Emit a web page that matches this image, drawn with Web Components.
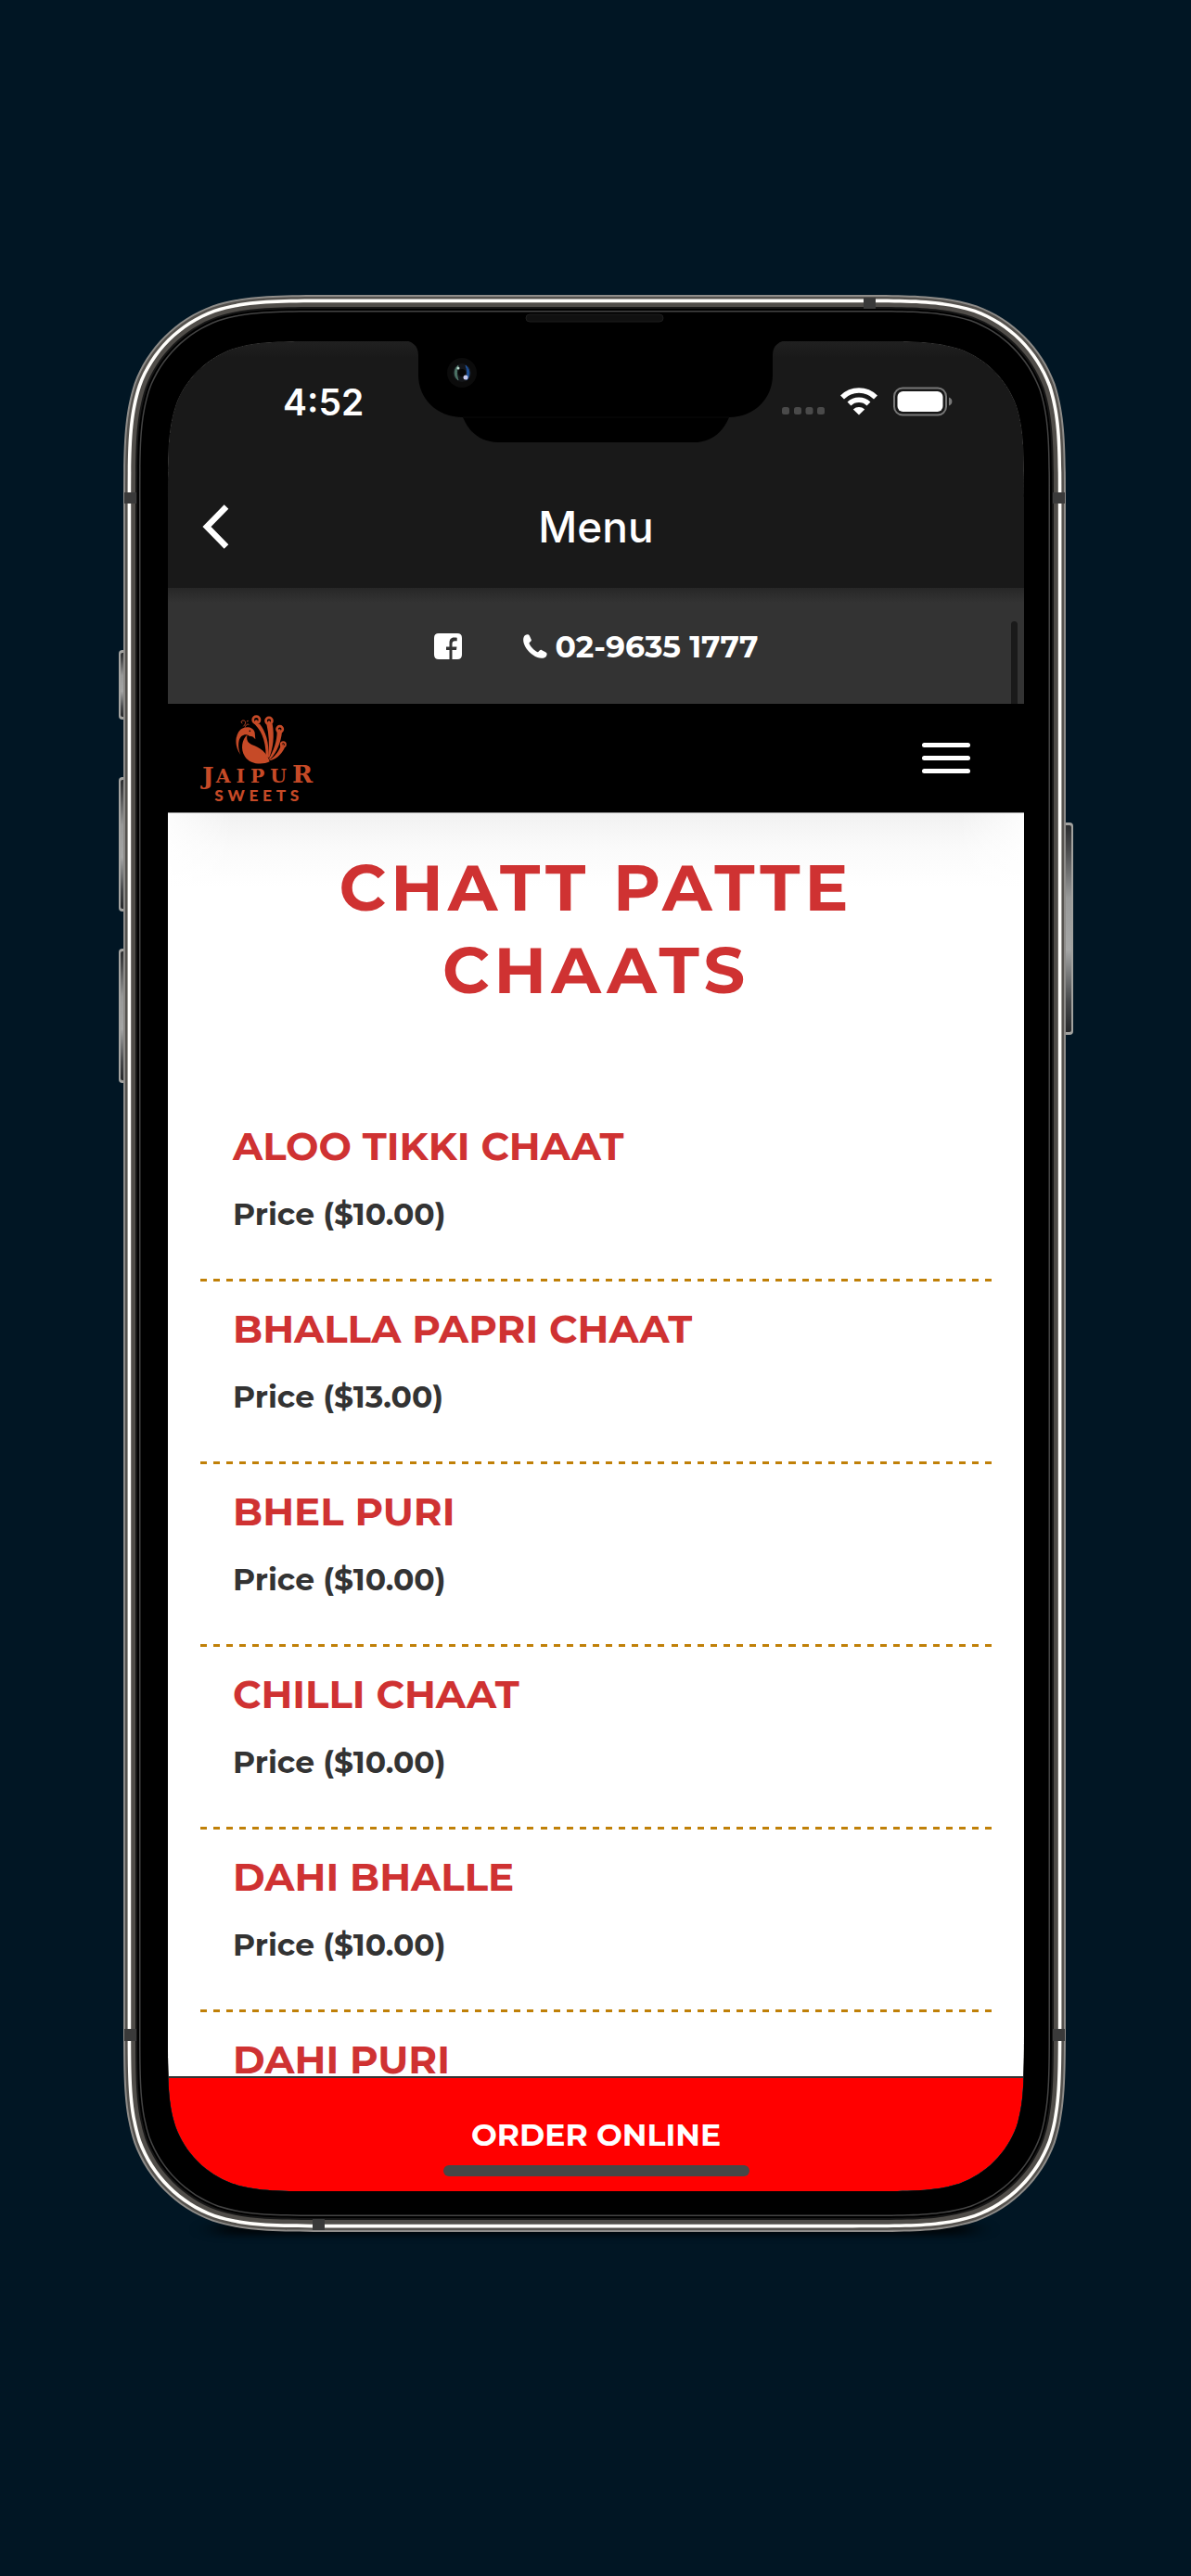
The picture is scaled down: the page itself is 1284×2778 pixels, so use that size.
<!DOCTYPE html>
<html lang="en">
<head>
<meta charset="utf-8">
<meta name="viewport" content="width=device-width, initial-scale=1">
<title>Jaipur Sweets – Menu</title>
<style>
  body { margin: 0; min-height: 100vh; background: #011624; font-family: Montserrat, Inter, sans-serif; }
</style>
</head>
<body>
<phone-frame>
  <app-header heading="Menu" time="4:52"></app-header>
  <contact-bar phone="02-9635 1777"></contact-bar>
  <site-nav></site-nav>
  <menu-section heading="Chatt Patte Chaats">
    <menu-item price="$10.00">Aloo Tikki Chaat</menu-item>
    <menu-item price="$13.00">Bhalla Papri Chaat</menu-item>
    <menu-item price="$10.00">Bhel Puri</menu-item>
    <menu-item price="$10.00">Chilli Chaat</menu-item>
    <menu-item price="$10.00">Dahi Bhalle</menu-item>
    <menu-item>Dahi Puri</menu-item>
  </menu-section>
  <order-bar>Order Online</order-bar>
</phone-frame>

<script>
const define = (name, render) => customElements.define(name, class extends HTMLElement {
  constructor() {
    super();
    this.attachShadow({ mode: "open" });
  }
  connectedCallback() {
    this.shadowRoot.innerHTML = "<style>:host,*{box-sizing:border-box}</style>" + render(this);
  }
});

/* Rounded rectangle with continuous-curvature corners. */
function squircle(x0, y0, x1, y1, r) {
  const a = 1.528 * r, b = 1.088 * r, c = 0.868 * r, d = 0.631 * r, e = 0.075 * r, f = 0.373 * r, g = 0.169 * r;
  const corner = (cx, cy, sx, sy, flip) => {
    const p = (u, v) => `${(cx + sx * u).toFixed(1)} ${(cy + sy * v).toFixed(1)}`;
    const pts = [[a, 0], [b, 0], [c, 0], [d, e], [f, g], [g, f], [e, d], [0, c], [0, b], [0, a]];
    if (flip) pts.reverse();
    const q = pts.map(([u, v]) => p(u, v));
    return `L${q[0]}C${q[1]} ${q[2]} ${q[3]}C${q[4]} ${q[5]} ${q[6]}C${q[7]} ${q[8]} ${q[9]}`;
  };
  return (corner(x1, y0, -1, 1, false) + corner(x1, y1, -1, -1, true) +
          corner(x0, y1, 1, -1, false) + corner(x0, y0, 1, 1, true)).replace("L", "M") + "Z";
}

define("phone-frame", () => {
  const W = 1016, H = 2089, R = 152;
  const hole = squircle(48, 50, 971, 2045, 110);
  const ring = (inset, color) =>
    `<path fill="${color}" fill-rule="evenodd" d="${squircle(inset, inset, W - inset, H - inset, R - inset)}${hole}"/>`;
  const key = (x, y, w, h) =>
    `<rect x="${x}" y="${y}" width="${w}" height="${h}" rx="4" fill="#a2a29f"/>
     <rect x="${x + 2}" y="${y + 3}" width="${w - 4}" height="${h - 6}" rx="2" fill="url(#key)"/>`;
  return `
  <style>
    :host { display: block; position: relative; margin: 318px 135px 0 133px; aspect-ratio: ${W} / ${H}; }
    .screen { height: 100%; padding: 50px 45px 44px 48px; display: flex; flex-direction: column; }
    .glass { flex: 1; min-height: 0; display: flex; flex-direction: column; background: #fff; }
    svg { position: absolute; inset: 0; width: 100%; height: 100%; overflow: visible; pointer-events: none; }
    .shade { z-index: -1; }
  </style>
  <svg class="shade" viewBox="0 0 ${W} ${H}" preserveAspectRatio="none" aria-hidden="true">
    <defs>
      <linearGradient id="key" x1="0" y1="0" x2="0" y2="1">
        <stop offset="0" stop-color="#2b2d2f"/><stop offset=".12" stop-color="#4b4c4d"/>
        <stop offset=".35" stop-color="#989998"/><stop offset=".6" stop-color="#a5a6a5"/>
        <stop offset=".85" stop-color="#47494b"/><stop offset="1" stop-color="#26282a"/>
      </linearGradient>
      <filter id="soft" x="-10%" y="-200%" width="120%" height="500%"><feGaussianBlur stdDeviation="14 4"/></filter>
    </defs>
    <rect x="100" y="2080" width="816" height="12" rx="6" fill="#000" opacity=".8" filter="url(#soft)"/>
    ${key(-5, 383, 12, 75)}${key(-5, 520, 12, 145)}${key(-5, 705, 12, 145)}${key(1009, 569, 15, 229)}
  </svg>
  <div class="screen"><div class="glass"><slot></slot></div></div>
  <svg viewBox="0 0 ${W} ${H}" preserveAspectRatio="none" aria-hidden="true">
    ${ring(0, "#8e8c89")}${ring(2, "#55524e")}${ring(4.6, "#fffefb")}${ring(8.2, "#504d49")}
    ${ring(13, "#161616")}${ring(15, "#000")}${ring(17, "#444")}${ring(18.5, "#000")}
    <g fill="#3a3a3a">
      <path d="M1 213h13v12H1zM1002 213h13v12h-13zM1 1870h13v13H1zM1002 1870h13v13h-13zM798 3h13v12h-13zM204 2075h13v12h-13z"/>
    </g>
    <path d="M300 48C311 50 318 54 318 65V86C318 112 338 132 366 132C373 149 386 159 404 159H615C633 159 646 149 653 132C680 132 700 112 700 86V65C700 54 707 50 718 48Z"/>
    <path d="M366 132H653" stroke="#0b0b0b" fill="none"/>
    <rect x="434" y="21" width="148" height="8" rx="4" fill="#101010" stroke="#1d1d1d"/>
    <circle cx="365" cy="84" r="16" fill="#0b0b0b"/>
    <circle cx="365" cy="84" r="10" fill="#14161a"/>
    <path d="M361 76C356 80 356 88 361 92C359 86 359 81 361 76Z" fill="#4c7365" stroke="#4c7365"/>
    <path d="M369 76C374 80 374 88 370 92C371 86 371 81 369 76Z" fill="#1d4f96" stroke="#1d4f96"/>
    <circle cx="365" cy="84" r="4" fill="#050505"/>
    <circle cx="369" cy="89" r="2.500" fill="#c9cbee"/>
    <circle cx="361" cy="79" r="1.500" fill="#b9d8cc"/>
  </svg>`;
});

define("app-header", el => `
  <style>
    :host { display: block; flex: none; background: linear-gradient(#202020, #191919 18px); color: #fff;
            font-family: Inter, sans-serif; }
    .status { height: 130px; padding: 0 75px 0 124px; display: flex; align-items: center; justify-content: space-between; }
    .time { font-size: 39px; font-weight: 600; }
    .title { height: 136px; padding: 4px 36px 0; display: grid; grid-template-columns: 32px 1fr 32px; align-items: center; }
    h1 { margin: 0; text-align: center; font-size: 46px; font-weight: 500; }
    button { padding: 0; border: 0; background: none; display: flex; }
  </style>
  <div class="status">
    <span class="time">${el.getAttribute("time")}</span>
    <svg width="186" height="32" viewBox="0 0 186 32" fill="#fff" aria-hidden="true">
      <g fill="#4a4a4a"><rect y="22" width="8" height="8" rx="2.5"/><rect x="13" y="22" width="8" height="8" rx="2.5"/>
        <rect x="25.5" y="22" width="8" height="8" rx="2.5"/><rect x="38" y="22" width="8" height="8" rx="2.5"/></g>
      <g fill="none" stroke="#fff" stroke-width="5.6">
        <path d="M65 11.5A25.500 25.500 0 0 1 101 11.500"/><path d="M72.500 18.500A15 15 0 0 1 93.500 18.500"/>
      </g>
      <path d="M83 30.500L76.800 24.500C80.300 21.200 85.700 21.200 89.200 24.500Z"/>
      <rect x="121" y="1.500" width="56" height="29" rx="9" fill="none" stroke="#777" stroke-width="2"/>
      <rect x="124.500" y="5" width="49" height="22" rx="6"/>
      <path d="M180 11.500C184.500 13 184.500 19 180 20.500Z" fill="#777"/>
    </svg>
  </div>
  <div class="title">
    <button type="button" aria-label="Back">
      <svg width="32" height="50" viewBox="0 0 32 50" fill="none" stroke="#fff" stroke-width="6.500"><path d="M27 3.500L6 25L27 46.500"/></svg>
    </button>
    <h1>${el.getAttribute("heading")}</h1>
  </div>`);

define("contact-bar", el => `
  <style>
    :host { display: block; flex: none; position: relative; background: linear-gradient(#272727, #333 16px); color: #fff; }
    nav { height: 125px; display: flex; align-items: center; justify-content: center; gap: 66px; }
    a { color: inherit; text-decoration: none; display: flex; align-items: center; gap: 9px; font-size: 33px; font-weight: 700; }
    .thumb { position: absolute; right: 7px; top: 36px; bottom: 0; width: 7px; border-radius: 4px 4px 0 0; background: #1a1a1a; }
  </style>
  <nav>
    <a href="#facebook" aria-label="Facebook">
      <svg width="30" height="28" viewBox="0 0 30 28"><path fill="#fff" fill-rule="evenodd" d="M5 0H25Q30 0 30 5V23Q30 28 25 28H19.500V18H24L24.500 14.500H19.500V11.500C19.500 9 20.500 8.200 22.500 8.200H24.700V4.700C23.500 4.500 22.500 4.400 21.500 4.400C18 4.400 16.500 6.500 16.500 10.500V14.500H13V18H16.500V28H5Q0 28 0 23V5Q0 0 5 0Z"/></svg>
    </a>
    <a href="tel:0296351777">
      <svg width="26" height="26" viewBox="0 0 26 26"><path fill="#fff" d="M4.500 .2C6 .2 6.500 .6 7.500 3C8.600 5.600 9.300 6 8.700 7C7.700 8.600 6.200 9 6.500 10C8 13.500 12 17.500 15.500 19.300C16.500 19.600 17.600 16.800 19 16.800C20 16.800 24.500 19.500 25.300 20.300C26.300 21.800 24.700 24.400 23.500 25C21 26.200 18 26 15.500 25C9 22.500 3.500 17 1 10.500C0 7.500 -.2 5 .8 2.700C1.300 1.300 3 .2 4.500 .2Z"/></svg>
      ${el.getAttribute("phone")}
    </a>
  </nav>
  <div class="thumb"></div>`);

define("site-nav", () => `
  <style>
    :host { display: flex; flex: none; align-items: center; justify-content: space-between; height: 118px;
            padding: 0 58px 0 35px; background: #000; border-bottom: 1px solid #999; }
    a, button { display: flex; padding: 0; border: 0; background: none; }
    svg { overflow: visible; }
    button { flex-direction: column; gap: 9px; width: 52px; }
    i { height: 5px; border-radius: 3px; background: #fff; align-self: stretch; }
  </style>
  <a href="#home" aria-label="Jaipur Sweets">
    <svg width="127" height="95" viewBox="78 60 381 285" fill="#c64a27">
      <path d="M230 127C212 142 207 175 222 197C238 223 278 226 302 214C294 184 270 168 244 159C230 153 226 141 230 127Z"/>
      <path d="M208 192C188 166 189 128 208 110C222 98 250 100 254 120L256 142C250 134 246 131 236 131C226 122 208 127 203 146C199 164 203 180 208 192Z"/>
      <path fill="none" stroke="#c64a27" stroke-width="3" d="M222 104C225 94 231 92 235 94M217 100C226 92 226 82 218 81C210 80 208 88 214 90M228 84L233 82"/>
      <circle cx="238" cy="115" r="2.500" fill="#000"/>
      <path d="M248 88C272 108 290 142 290 196L298 202C302 152 288 114 270 92Z"/>
      <path d="M292 92C300 125 302 160 297 198L300 203C314 170 318 130 311 92Z"/>
      <path d="M326 116C326 148 316 176 299 206L304 206C326 184 339 150 342 118Z"/>
      <path d="M338 162C332 182 318 198 300 210L306 210C328 204 344 186 352 166Z"/>
      <g fill="#000" stroke="#c64a27" stroke-width="8">
        <circle cx="259" cy="79" r="11"/><circle cx="300" cy="82" r="10.500"/><circle cx="335" cy="109" r="9.500"/><circle cx="346" cy="158" r="7.500" stroke-width="6"/>
      </g>
      <g><circle cx="259" cy="84" r="5"/><circle cx="300" cy="87" r="5"/><circle cx="334" cy="113" r="4"/><circle cx="345" cy="160" r="3"/></g>
      <g font-family="DejaVu Serif, serif" font-weight="700">
        <text x="84" y="288" font-size="80">J</text>
        <text x="128" y="281" font-size="61" letter-spacing="18">AIPU<tspan font-size="80">R</tspan></text>
      </g>
      <text x="124" y="341" font-family="Lato, sans-serif" font-weight="900" font-size="52" letter-spacing="14">SWEETS</text>
    </svg>
  </a>
  <button type="button" aria-label="Open navigation"><i></i><i></i><i></i></button>`);

define("menu-section", el => `
  <style>
    :host { display: block; flex: 1; min-height: 0; overflow: hidden; padding: 0 35px;
            background: linear-gradient(90deg, rgb(255 255 255 / .8), transparent 70px calc(100% - 70px), rgb(255 255 255 / .8)),
                        linear-gradient(#f1f1f1, #fafafa 36px, #fff 80px); }
    h2 { margin: 0; padding: 36px 80px 59px; text-align: center; text-transform: uppercase; color: #cf3232;
         font-size: 70px; line-height: 89px; font-weight: 700; letter-spacing: 5px; }
    ul { margin: 0; padding: 35px 0 0; list-style: none; }
  </style>
  <h2>${el.getAttribute("heading")}</h2>
  <ul role="list"><slot></slot></ul>`);

define("menu-item", el => `
  <style>
    :host { display: flex; flex-direction: column; height: 197px; padding: 23px 35px 0;
            background: repeating-linear-gradient(90deg, #c08008 0 7px, transparent 7px calc((100% - 7px) / 60)) bottom / 100% 3px no-repeat; }
    h3, p { margin: 0; font-weight: 700; }
    h3 { font-size: 42px; line-height: 56px; text-transform: uppercase; color: #cf3232; }
    p { padding-top: 23px; font-size: 33px; line-height: 44px; color: #333; }
  </style>
  <h3><slot></slot></h3>
  ${el.hasAttribute("price") ? `<p>Price (${el.getAttribute("price")})</p>` : ""}`);

define("order-bar", () => `
  <style>
    :host { display: block; flex: none; height: 124px; border-top: 2px solid #333; background: #f00; }
    a { display: flex; flex-direction: column; align-items: center; gap: 11px; padding-top: 39px; color: #fff; text-decoration: none;
        font-size: 33px; line-height: 44px; font-weight: 700; text-transform: uppercase; }
    i { width: 330px; height: 12px; border-radius: 6px; background: #474747; }
  </style>
  <a href="#order"><span><slot></slot></span><i></i></a>`);
</script>
</body>
</html>
